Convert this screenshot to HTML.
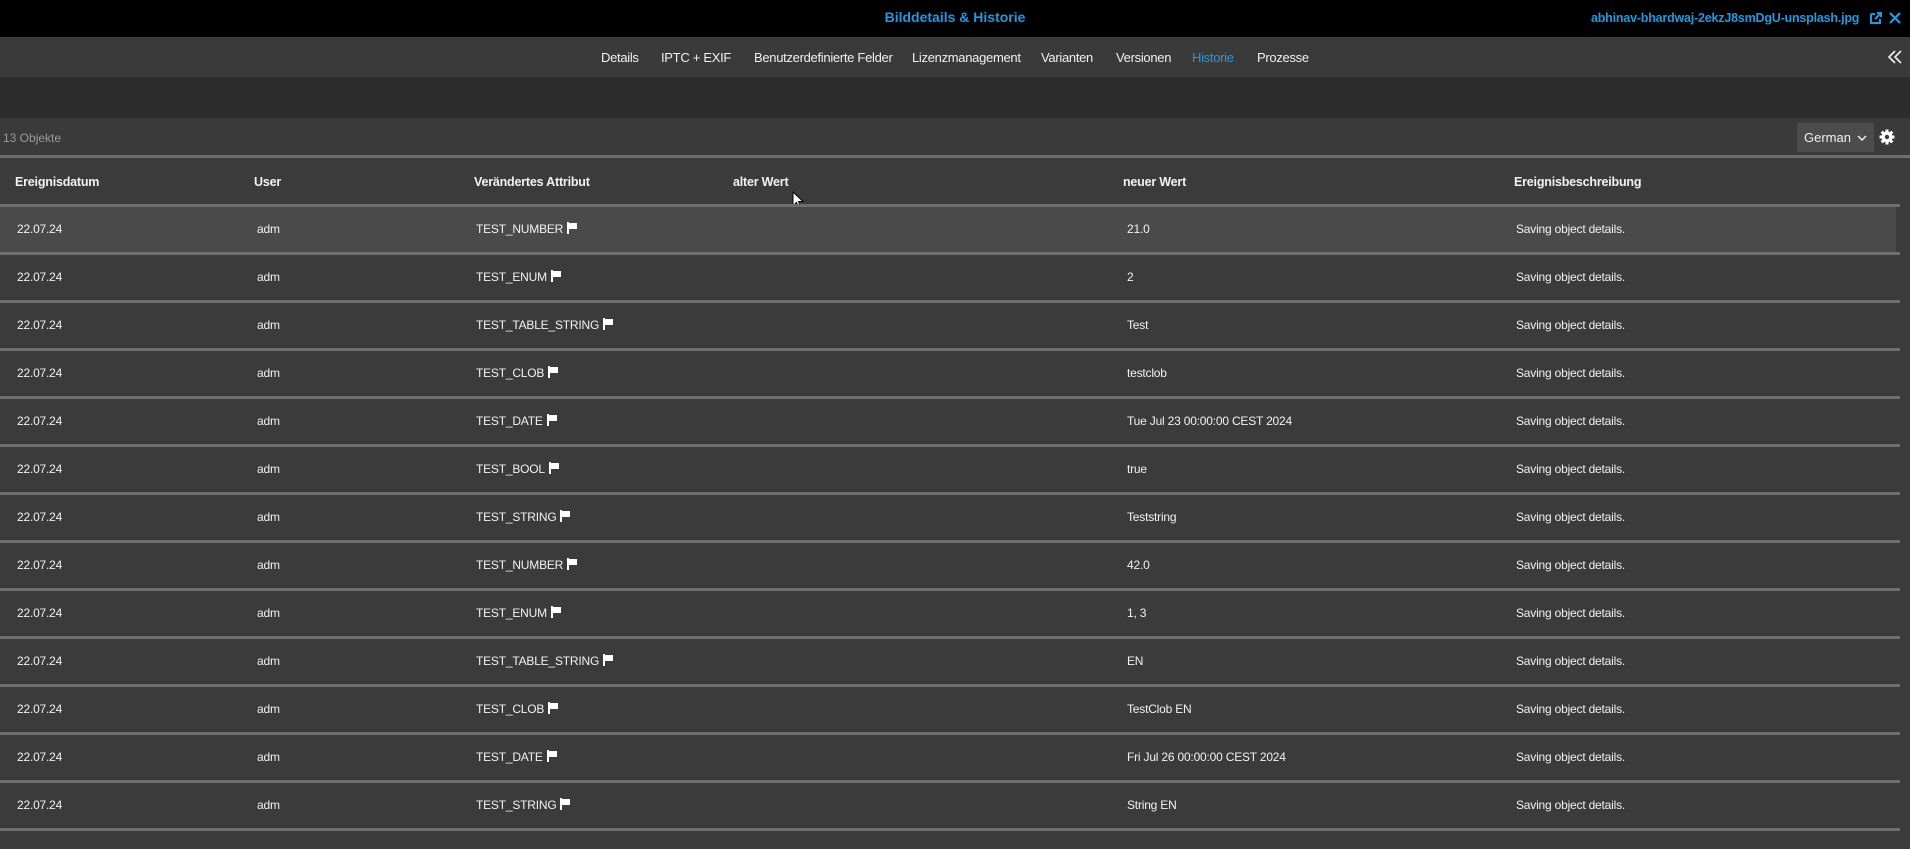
<!DOCTYPE html>
<html><head><meta charset="utf-8"><style>
*{margin:0;padding:0;box-sizing:border-box}
body{width:1910px;height:849px;background:#3b3b3b;font-family:"Liberation Sans",Arial,sans-serif;color:#eee;position:relative;overflow:hidden}
.a{position:absolute;white-space:nowrap}
#top{position:absolute;left:0;top:0;width:1910px;height:37px;background:#000}
#tabs{position:absolute;left:0;top:37px;width:1910px;height:40px;background:#3a3a3a}
#band{position:absolute;left:0;top:77px;width:1910px;height:41px;background:#2c2c2c}
#tool{position:absolute;left:0;top:118px;width:1910px;height:38px;background:#3a3a3a}
.tab{position:absolute;top:50px;font-size:13px;color:#f0f0f0;letter-spacing:-0.3px}
.line{position:absolute;left:0;width:1900px;height:3px;background:#6e6e6e}
.h{position:absolute;font-size:12.5px;font-weight:bold;top:175px;color:#f2f2f2;letter-spacing:-0.2px}
.c{position:absolute;font-size:12px;color:#f2f2f2;letter-spacing:-0.2px}
.flag{display:inline-block;vertical-align:-1px;margin-left:4px}
</style></head><body>
<div id="top"></div>
<div class="a" style="left:0;width:1910px;top:9px;text-align:center;font-size:14px;font-weight:bold;color:#1f9ae0">Bilddetails &amp; Historie</div>
<div class="a" style="left:1591px;top:11px;font-size:12.5px;font-weight:bold;color:#1f9ae0;letter-spacing:-0.2px">abhinav-bhardwaj-2ekzJ8smDgU-unsplash.jpg</div>
<svg class="a" style="left:1869px;top:11px" width="14" height="14" viewBox="0 0 14 14"><path d="M2 3h4M2 3v9h9v-4" stroke="#1f9ae0" stroke-width="2" fill="none"/><path d="M6 8l5-5M8 2h4v4" stroke="#1f9ae0" stroke-width="2" fill="none"/></svg>
<svg class="a" style="left:1889px;top:12px" width="12" height="12" viewBox="0 0 12 12"><path d="M1 1l10 10M11 1L1 11" stroke="#1f9ae0" stroke-width="2.2"/></svg>
<div id="tabs"></div>
<div class="tab" style="left:601px">Details</div>
<div class="tab" style="left:661px">IPTC + EXIF</div>
<div class="tab" style="left:754px">Benutzerdefinierte Felder</div>
<div class="tab" style="left:912px">Lizenzmanagement</div>
<div class="tab" style="left:1041px">Varianten</div>
<div class="tab" style="left:1116px">Versionen</div>
<div class="tab" style="left:1192px;color:#1f9ae0">Historie</div>
<div class="tab" style="left:1257px">Prozesse</div>
<svg class="a" style="left:1888px;top:50px" width="14" height="14" viewBox="0 0 14 14"><path d="M7 1L1 7l6 6M13 1L7 7l6 6" stroke="#eee" stroke-width="1.6" fill="none"/></svg>
<div id="band"></div>
<div id="tool"></div>
<div class="a" style="left:3px;top:131px;font-size:12px;color:#9a9a9a">13 Objekte</div>
<div class="a" style="left:1797px;top:123px;width:77px;height:29px;background:#4c4c4c;font-size:13px;color:#f0f0f0;padding:7px 0 0 7px">German <svg width="10" height="7" viewBox="0 0 10 7" style="margin-left:2px"><path d="M1 1l4 4 4-4" stroke="#eee" stroke-width="1.5" fill="none"/></svg></div>
<svg class="a" style="left:1879px;top:129px" width="16" height="16" viewBox="0 0 16 16"><g fill="#fff"><circle cx="8" cy="8" r="5.5"/><rect x="6.5" y="0.5" width="3" height="15"/><rect x="0.5" y="6.5" width="15" height="3"/><rect x="6.5" y="0.5" width="3" height="15" transform="rotate(45 8 8)"/><rect x="6.5" y="0.5" width="3" height="15" transform="rotate(-45 8 8)"/></g><circle cx="8" cy="8" r="2.2" fill="#3a3a3a"/></svg>
<div class="line" style="top:155px;width:1910px"></div>
<div class="h" style="left:15px">Ereignisdatum</div>
<div class="h" style="left:254px">User</div>
<div class="h" style="left:474px">Verändertes Attribut</div>
<div class="h" style="left:733px">alter Wert</div>
<div class="h" style="left:1123px">neuer Wert</div>
<div class="h" style="left:1514px">Ereignisbeschreibung</div>
<svg class="a" style="left:792px;top:191px" width="12" height="18" viewBox="0 0 12 18"><path d="M1 1v14l3.5-3.5 2.5 5 2-1-2.5-5H11z" fill="#fff" stroke="#000" stroke-width="1"/></svg>
<div id="rows"></div>
<script>
var d=[["TEST_NUMBER","21.0"],["TEST_ENUM","2"],["TEST_TABLE_STRING","Test"],["TEST_CLOB","testclob"],["TEST_DATE","Tue Jul 23 00:00:00 CEST 2024"],["TEST_BOOL","true"],["TEST_STRING","Teststring"],["TEST_NUMBER","42.0"],["TEST_ENUM","1, 3"],["TEST_TABLE_STRING","EN"],["TEST_CLOB","TestClob EN"],["TEST_DATE","Fri Jul 26 00:00:00 CEST 2024"],["TEST_STRING","String EN"]];
var h='';var flag='<svg class="flag" width="11" height="12" viewBox="0 0 11 12"><path d="M1 0v12" stroke="#fff" stroke-width="2"/><path d="M2 1h8v6H2z" fill="#fff"/></svg>';
for(var i=0;i<d.length;i++){var t=205+i*48;
h+='<div class="line" style="top:'+(t-1)+'px"></div>';
if(i==0)h+='<div style="position:absolute;left:0;top:'+(t+2)+'px;width:1896px;height:45px;background:#4a4a4a"></div>';
var y=t+17;
h+='<div class="c" style="left:17px;top:'+y+'px">22.07.24</div><div class="c" style="left:257px;top:'+y+'px">adm</div><div class="c" style="left:476px;top:'+y+'px">'+d[i][0]+flag+'</div><div class="c" style="left:1127px;top:'+y+'px">'+d[i][1]+'</div><div class="c" style="left:1516px;top:'+y+'px">Saving object details.</div>';}
h+='<div class="line" style="top:828px"></div>';
document.getElementById('rows').innerHTML=h;
</script>
</body></html>
